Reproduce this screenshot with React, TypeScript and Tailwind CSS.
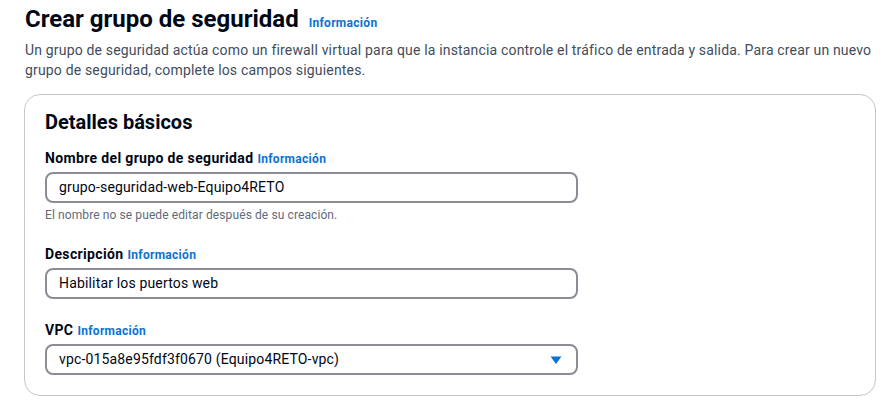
function InfoLink({ className = '' }: { className?: string }) {
  return (
    <a href="#" className={`text-[12px] font-bold tracking-[0.3px] text-[#0972d3] ${className}`}>
      Información
    </a>
  )
}

function Field({
  label,
  value,
  hint,
  select,
}: {
  label: string
  value: string
  hint?: string
  select?: boolean
}) {
  return (
    <div className="flex flex-col">
      <div className="flex items-baseline gap-1 leading-[18px]">
        <span className="text-[14px] font-bold tracking-[0.35px] text-[#000716]">{label}</span>
        <InfoLink />
      </div>
      <div className="mt-[4px] flex h-[31px] w-[533px] items-center justify-between rounded-lg border-2 border-[#8c8c94] bg-white pl-[12px] pr-[12px] text-[14px] tracking-[0.16px] text-[#000716]">
        <span>{value}</span>
        {select && (
          <svg width="12" height="10" viewBox="0 0 12 10" className="mr-[2px]">
            <path d="M0.5 1.5 H11.5 L6 9 Z" fill="#0972d3" />
          </svg>
        )}
      </div>
      {hint && (
        <p className="mt-[4px] text-[12px] leading-[16px] tracking-[0.1px] text-[#5f6b7a]">{hint}</p>
      )}
    </div>
  )
}

export default function App() {
  return (
    <div className="min-h-screen bg-white pl-[25px] pr-[10px] pt-[4px] font-['Roboto',sans-serif] text-[#000716]">
      <div className="flex items-baseline gap-[10px]">
        <h1 className="text-[24px] font-bold leading-[30px]">Crear grupo de seguridad</h1>
        <InfoLink />
      </div>
      <p className="mt-[6px] text-[14px] leading-[20px] tracking-[0.17px] text-[#414d5c]">
        Un grupo de seguridad actúa como un firewall virtual para que la instancia controle el tráfico de entrada y salida. Para crear un nuevo grupo de seguridad, complete los campos siguientes.
      </p>
      <div className="-ml-px mt-[14px] w-[852px] rounded-2xl border border-[#c6c6cd] px-[20px] pt-[14px] pb-[20px]">
        <h2 className="text-[20px] font-bold leading-[26px]">Detalles básicos</h2>
        <div className="mt-[14px] flex flex-col gap-[22px]">
          <Field
            label="Nombre del grupo de seguridad"
            value="grupo-seguridad-web-Equipo4RETO"
            hint="El nombre no se puede editar después de su creación."
          />
          <Field label="Descripción" value="Habilitar los puertos web" />
          <Field label="VPC" value="vpc-015a8e95fdf3f0670 (Equipo4RETO-vpc)" select />
        </div>
      </div>
    </div>
  )
}
